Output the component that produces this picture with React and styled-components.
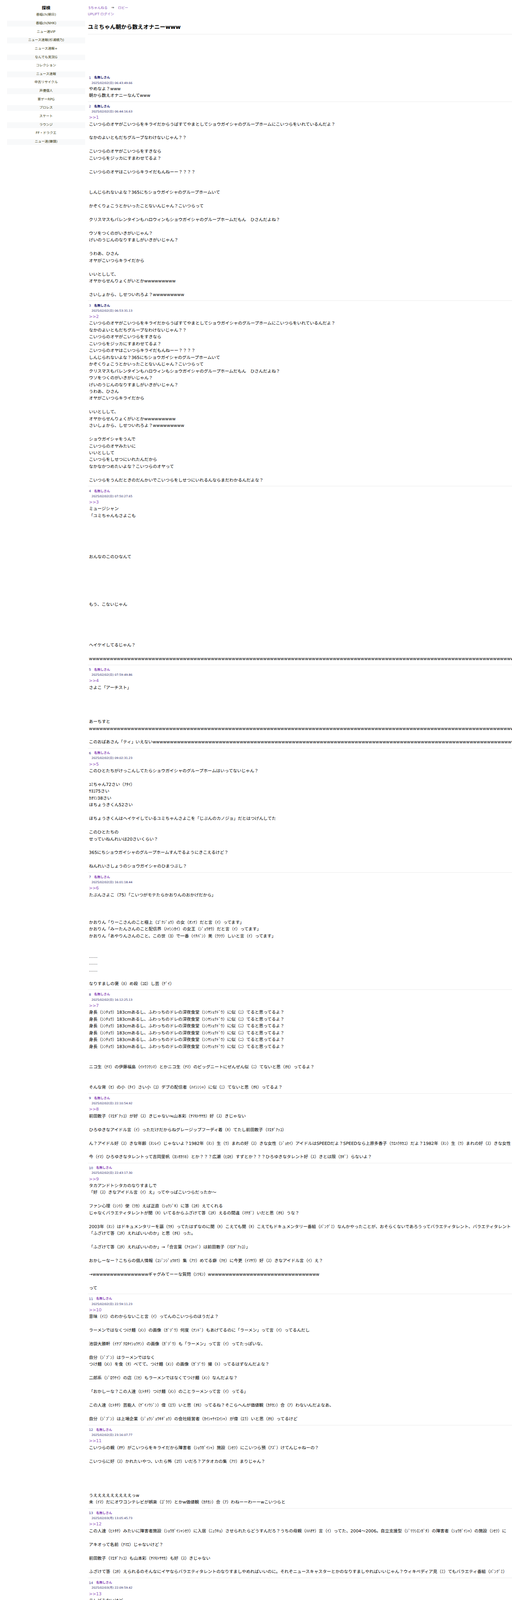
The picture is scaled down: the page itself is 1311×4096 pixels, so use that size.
import React from "react";
import styled, { createGlobalStyle } from "styled-components";

// reference is 1920 wide, the window 1311
const s = (n) => `${(n * 0.682).toFixed(3)}px`;

const GlobalStyle = createGlobalStyle`
  html, body {
    margin: 0;
    padding: 0;
    background: #fff;
  }
  body {
    font-family: "DejaVu Sans", "Noto Sans CJK JP", sans-serif;
    color: #000;
    text-rendering: geometricPrecision;
  }
`;

const Page = styled.div`
  display: flex;
  height: 100vh;
  overflow: hidden;
  padding-left: ${s(26)};
  box-sizing: border-box;
`;

const Sidebar = styled.aside`
  flex: 0 0 ${s(294)};
  padding-top: ${s(18)};
`;

const SideTitle = styled.h3`
  margin: 0 0 ${s(2)};
  font-size: ${s(16)};
  line-height: ${s(26)};
  font-weight: 700;
  text-align: center;
  color: #000;
`;

const SideRow = styled.a`
  display: block;
  height: ${s(21.75)};
  line-height: ${s(21.75)};
  margin-bottom: ${s(10)};
  font-size: ${s(12.6)};
  text-align: center;
  text-decoration: none;
  color: #3a3a12;
  background: ${(p) => (p.$alt ? "#f8f9fa" : "transparent")};
`;

const Main = styled.main`
  flex: 1;
  min-width: 0;
  margin-left: ${s(10)};
  padding-top: ${s(16)};
  white-space: nowrap;
`;

const Crumbs = styled.nav`
  display: flex;
  align-items: center;
  gap: ${s(14)};
  height: ${s(26)};
  padding-left: ${s(2)};
  font-size: ${s(12.8)};
`;

const Arrow = styled.span`
  color: #222;
`;

const TopLink = styled.a`
  color: #8a58ba;
  text-decoration: none;
`;

const LoginRow = styled.div`
  height: ${s(26)};
  line-height: ${s(26)};
  font-size: ${s(12.8)};
`;

const Title = styled.h1`
  margin: ${s(20)} 0 0;
  padding-bottom: ${s(8)};
  font-size: ${s(20.8)};
  line-height: ${s(32)};
  font-weight: 700;
  color: #000;
  border-bottom: 1px solid #eaeaea;
`;

const AdSlot = styled.div`
  height: ${s(145)};
`;

const Post = styled.article`
  padding: ${s(7)} 0 ${s(9)} ${s(4)};
  border-top: ${(p) => (p.$first ? "none" : "1px solid #eaeaea")};
`;

const PostHead = styled.div`
  display: flex;
  align-items: center;
  gap: ${s(11.5)};
  height: ${s(20)};
  font-size: ${s(12)};
`;

const PostNumber = styled.span`
  color: #2a2a7c;
`;

const PostName = styled.a`
  font-weight: 700;
  text-decoration: none;
  color: ${(p) => (p.$visited ? "#8a48b8" : "#14146c")};
`;

const PostDate = styled.div`
  height: ${s(20)};
  line-height: ${s(20)};
  margin-left: ${s(10)};
  font-size: ${s(11)};
  color: #2c2c6a;
`;

const Message = styled.div`
  margin-top: ${s(-0.8)};
  font-size: ${s(16)};
  line-height: ${s(25.6)};
  white-space: pre;
  color: #000;
`;

const Quote = styled.a`
  color: #9358be;
  text-decoration: none;
`;

const boards = [
  "番組ch(朝日)",
  "番組ch(NHK)",
  "ニュー速VIP",
  "ニュース速報(杉浦綾乃)",
  "ニュース速報+",
  "なんでも実況G",
  "コレクション",
  "ニュース速報",
  "中古リサイクル",
  "声優個人",
  "家ゲーRPG",
  "プロレス",
  "スケート",
  "ラウンジ",
  "FF・ドラクエ",
  "ニュー速(嫌儲)",
];

const height = "身長（ｼﾝﾁｮｳ）183cmあるし、ふわっちのドレの深夜食堂（ｼﾝﾔｼｮｸﾄﾞｳ）に似（ﾆ）てると思ってるよ？";
const wwwLong = "w".repeat(150);

const posts = [
  {
    date: "2025/02/02(日) 06:43:49.66",
    body: `やめなよ？www
朝から数えオナニーなんてwww`,
  },
  {
    date: "2025/02/02(日) 06:44:16.63",
    quote: 1,
    body: `こいつらのオヤがこいつらをキライだからうばすてやまとしてショウガイシャのグループホームにこいつらをいれているんだよ？

なかのよいともだちグループなわけないじゃん？？

こいつらのオヤがこいつらをすきなら
こいつらをジッカにすまわせてるよ？

こいつらのオヤはこいつらキライだもんねーー？？？？


しんじられないよな？365にちショウガイシャのグループホームいて

かぞくりょこうとかいったことないんじゃん？こいつらって

クリスマスもバレンタインもハロウィンもショウガイシャのグループホームだもん　ひさんだよね？

ウソをつくのがいきがいじゃん？
げいのうじんのなりすましがいきがいじゃん？

うわあ、ひさん
オヤがこいつらキライだから

いいとしして、
オヤからせんりょくがいとかwwwwwwwww

さいしょから、しせついれろよ？wwwwwwwww`,
  },
  {
    date: "2025/02/02(日) 06:53:31.13",
    quote: 2,
    body: `こいつらのオヤがこいつらをキライだからうばすてやまとしてショウガイシャのグループホームにこいつらをいれているんだよ？
なかのよいともだちグループなわけないじゃん？？
こいつらのオヤがこいつらをすきなら
こいつらをジッカにすまわせてるよ？
こいつらのオヤはこいつらキライだもんねーー？？？？
しんじられないよな？365にちショウガイシャのグループホームいて
かぞくりょこうとかいったことないんじゃん？こいつらって
クリスマスもバレンタインもハロウィンもショウガイシャのグループホームだもん　ひさんだよね？
ウソをつくのがいきがいじゃん？
げいのうじんのなりすましがいきがいじゃん？
うわあ、ひさん
オヤがこいつらキライだから

いいとしして、
オヤからせんりょくがいとかwwwwwwwww
さいしょから、しせついれろよ？wwwwwwwww

ショウガイシャをうんで
こいつらのオヤみたいに
いいとしして
こいつらをしせつにいれたんだから
なかなかつめたいよな？こいつらのオヤって

こいつらをうんだときのだんかいでこいつらをしせつにいれるんならまだわかるんだよな？`,
  },
  {
    date: "2025/02/02(日) 07:50:27.65",
    quote: 3,
    body: `ミュージシャン
「ユミちゃんもさよこも





おんなのこのひなんて






もう、こないじゃん





ヘイケイしてるじゃん？

${wwwLong}`,
  },
  {
    date: "2025/02/02(日) 07:59:49.86",
    quote: 4,
    body: `さよこ「アーチスト」




あーちすと
${wwwLong}

このおばあさん「ティ」いえない${wwwLong}`,
  },
  {
    date: "2025/02/02(日) 09:02:31.23",
    quote: 5,
    body: `このひとたちがけっこんしてたらショウガイシャのグループホームはいってないじゃん？

ﾕﾐちゃん72さい（ｱﾀｲ）
ｻﾖｺ75さい
ｶｵﾘﾝ38さい
ほちょうきくん52さい

ほちょうきくんはヘイケイしているユミちゃんさよこを「じぶんのカノジョ」だとはつげんしてた

このひとたちの
せっていねんれいは20さいくらい？

365にちショウガイシャのグループホームすんでるようにきこえるけど？

ねんれいさしょうのショウガイシャのひまつぶし？`,
  },
  {
    date: "2025/02/02(日) 16:01:18.44",
    quote: 6,
    body: `たぶんさよこ（75）「こいつがモテたらかおりんのおかげだから」



かおりん「りーこさんのこと極上（ｺﾞｸｼﾞｮｳ）の女（ｵﾝﾅ）だと言（ｲ）ってます」
かおりん「みーたんさんのこと配信界（ﾊｲｼﾝｶｲ）の女王（ｼﾞｮｳｵｳ）だと言（ｲ）ってます」
かおりん「あやりんさんのこと、この世（ﾖ）で一番（ｲﾁﾊﾞﾝ）美（ｳﾂｸ）しいと言（ｲ）ってます」


……
……
……

なりすましの褒（ﾎ）め殺（ｺﾛ）し芸（ｹﾞｲ）`,
  },
  {
    date: "2025/02/02(日) 16:12:25.13",
    quote: 7,
    body: `${height}
${height}
${height}
${height}
${height}
${height}


ニコ生（ﾅﾏ）の伊藤福島（ｲﾄｳﾌｸｼﾏ）とかニコ生（ﾅﾏ）のビッグニートにぜんぜん似（ﾆ）てないと思（ｵﾓ）ってるよ？


そんな背（ｾ）の小（ﾁｲ）さい小（ｺ）デブの配信者（ﾊｲｼﾝｼｬ）に似（ﾆ）てないと思（ｵﾓ）ってるよ？`,
  },
  {
    date: "2025/02/02(日) 22:10:54.92",
    quote: 8,
    body: `前田敦子（ﾏｴﾀﾞｱｯｺ）が好（ｽ）きじゃない≒山本彩（ﾔﾏﾓﾄｻﾔｶ）好（ｽ）きじゃない

ひろゆきなアイドル言（ｲ）っただけだからねグレージップフーディ着（ｷ）てたし前田敦子（ﾏｴﾀﾞｱｯｺ）

ん？アイドル好（ｽ）きな年齢（ﾈﾝﾚｲ）じゃないよ？1982年（ﾈﾝ）生（ｳ）まれの好（ｽ）きな女性（ｼﾞｮｾｲ）アイドルはSPEEDだよ？SPEEDなら上原多香子（ｳｴﾊﾗﾀｶｺ）だよ？1982年（ﾈﾝ）生（ｳ）まれの好（ｽ）きな女性

今（ｲﾏ）ひろゆきなタレントって吉岡里帆（ﾖｼｵｶﾘﾎ）とか？？？広瀬（ﾋﾛｾ）すずとか？？？ひろゆきなタレント好（ｽ）きとは限（ｶｷﾞ）らないよ？`,
  },
  {
    date: "2025/02/02(日) 22:43:17.30",
    quote: 9,
    body: `タカアンドトシタカのなりすましで
「好（ｽ）きなアイドル言（ｲ）え」ってやっぱこいつらだったか〜

ファン心理（ｼﾝﾘ）使（ﾂｶ）えば正直（ｼｮｳｼﾞｷ）に答（ｺﾀ）えてくれる
じゃなくバラエティタレントが聞（ｷ）いてるからふざけて答（ｺﾀ）えるの間違（ﾏﾁｶﾞ）いだと思（ｵﾓ）うな？

2003年（ﾈﾝ）はドキュメンタリーを謳（ｳﾀ）ってたはずなのに聞（ｷ）こえても聞（ｷ）こえてもドキュメンタリー番組（ﾊﾞﾝｸﾞﾐ）なんかやったことが、おそらくないであろうってバラエティタレント、バラエティタレント
「ふざけて答（ｺﾀ）えればいいのか」と思（ｵﾓ）った。

「ふざけて答（ｺﾀ）えればいいのか」→「合言葉（ｱｲｺﾄﾊﾞ）は前田敦子（ﾏｴﾀﾞｱｯｺ）」

おかしーなー？こちらの個人情報（ｺｼﾞﾝｼﾞｮｳﾎｳ）集（ｱﾂ）めてる癖（ｸｾ）に今更（ｲﾏｻﾗ）好（ｽ）きなアイドル言（ｲ）え？

→${"w".repeat(16)}ギャグみてーーな質問（ｼﾂﾓﾝ）${"w".repeat(32)}

って`,
  },
  {
    date: "2025/02/02(日) 22:59:11.23",
    quote: 10,
    body: `意味（ｲﾐ）のわからないこと言（ｲ）ってんのこいつらのほうだよ？

ラーメンではなくつけ麺（ﾒﾝ）の画像（ｶﾞｿﾞｳ）何度（ﾅﾝﾄﾞ）もあげてるのに「ラーメン」って言（ｲ）ってるんだし

池袋大勝軒（ｲｹﾌﾞｸﾛﾀｲｼｮｳｹﾝ）の画像（ｶﾞｿﾞｳ）も「ラーメン」って言（ｲ）ってたっぽいな、

自分（ｼﾞﾌﾞﾝ）はラーメンではなく
つけ麺（ﾒﾝ）を食（ﾀ）べてて、つけ麺（ﾒﾝ）の画像（ｶﾞｿﾞｳ）撮（ﾄ）ってるはずなんだよな？

二郎系（ｼﾞﾛｳｹｲ）の店（ﾐｾ）もラーメンではなくてつけ麺（ﾒﾝ）なんだよな？

「おかしーな？この人達（ﾋﾄﾀﾁ）つけ麺（ﾒﾝ）のことラーメンって言（ｲ）ってる」

この人達（ﾋﾄﾀﾁ）芸能人（ｹﾞｲﾉｳｼﾞﾝ）偉（ｴﾗ）いと思（ｵﾓ）ってるね？そこらへんが価値観（ｶﾁｶﾝ）合（ｱ）わないんだよなあ、

自分（ｼﾞﾌﾞﾝ）は上場企業（ｼﾞｮｳｼﾞｮｳｷｷﾞｮｳ）の会社経営者（ｶｲｼｬｹｲｴｲｼｬ）が偉（ｴﾗ）いと思（ｵﾓ）ってるけど`,
  },
  {
    date: "2025/02/02(日) 23:16:07.77",
    quote: 11,
    body: `こいつらの親（ｵﾔ）がこいつらをキライだから障害者（ｼｮｳｶﾞｲｼｬ）施設（ｼｾﾂ）にこいつら預（ｱｽﾞ）けてんじゃねーの？

こいつらに好（ｽ）かれたいやつ、いたら怖（ｺﾜ）いだろ？アタオカの集（ｱﾂ）まりじゃん？




うえええええええええっw
未（ｲﾏ）だにオワコンテレビが娯楽（ｺﾞﾗｸ）とかw価値観（ｶﾁｶﾝ）合（ｱ）わねーーわーーwこいつらと`,
  },
  {
    date: "2025/02/03(月) 13:05:45.73",
    quote: 12,
    body: `この人達（ﾋﾄﾀﾁ）みたいに障害者施設（ｼｮｳｶﾞｲｼｬｼｾﾂ）に入居（ﾆｭｳｷｮ）させられたらどうすんだろ？うちの母親（ﾊﾊｵﾔ）言（ｲ）ってた、2004～2006。自立支援型（ｼﾞﾘﾂｼｴﾝｶﾞﾀ）の障害者（ｼｮｳｶﾞｲｼｬ）の施設（ｼｾﾂ）に

アキオって名前（ﾅﾏｴ）じゃないけど？

前田敦子（ﾏｴﾀﾞｱｯｺ）も山本彩（ﾔﾏﾓﾄｻﾔｶ）も好（ｽ）きじゃない

ふざけて答（ｺﾀ）えられるのそんなにイヤならバラエティタレントのなりすましやめればいいのに。それぞニュースキャスターとかのなりすましやればいいじゃん？ウィキペディア見（ﾐ）てもバラエティ番組（ﾊﾞﾝｸﾞﾐ）`,
  },
  {
    date: "2025/02/03(月) 22:09:59.42",
    quote: 13,
    body: `テレビみないけど`,
  },
];

const App = () => {
  return (
    <>
      <GlobalStyle />
      <Page>
        <Sidebar>
          <SideTitle>探検</SideTitle>
          {boards.map((board, index) => (
            <SideRow key={board} href="#" $alt={index % 2 === 1}>
              {board}
            </SideRow>
          ))}
        </Sidebar>
        <Main>
          <Crumbs>
            <TopLink href="#">5ちゃんねる</TopLink>
            <Arrow>⇒</Arrow>
            <TopLink href="#">ロビー</TopLink>
          </Crumbs>
          <LoginRow>
            <TopLink href="#">UPLIFT ログイン</TopLink>
          </LoginRow>
          <Title>ユミちゃん朝から数えオナニーwww</Title>
          <AdSlot />
          {posts.map((post, index) => (
            <Post key={post.date} $first={index === 0}>
              <PostHead>
                <PostNumber>{index + 1}</PostNumber>
                <PostName href="#" $visited={index > 2}>
                  名無しさん
                </PostName>
              </PostHead>
              <PostDate>{post.date}</PostDate>
              <Message>
                {post.quote && (
                  <>
                    <Quote href="#">&gt;&gt;{post.quote}</Quote>
                    {"\n"}
                  </>
                )}
                {post.body}
              </Message>
            </Post>
          ))}
        </Main>
      </Page>
    </>
  );
};

export default App;
